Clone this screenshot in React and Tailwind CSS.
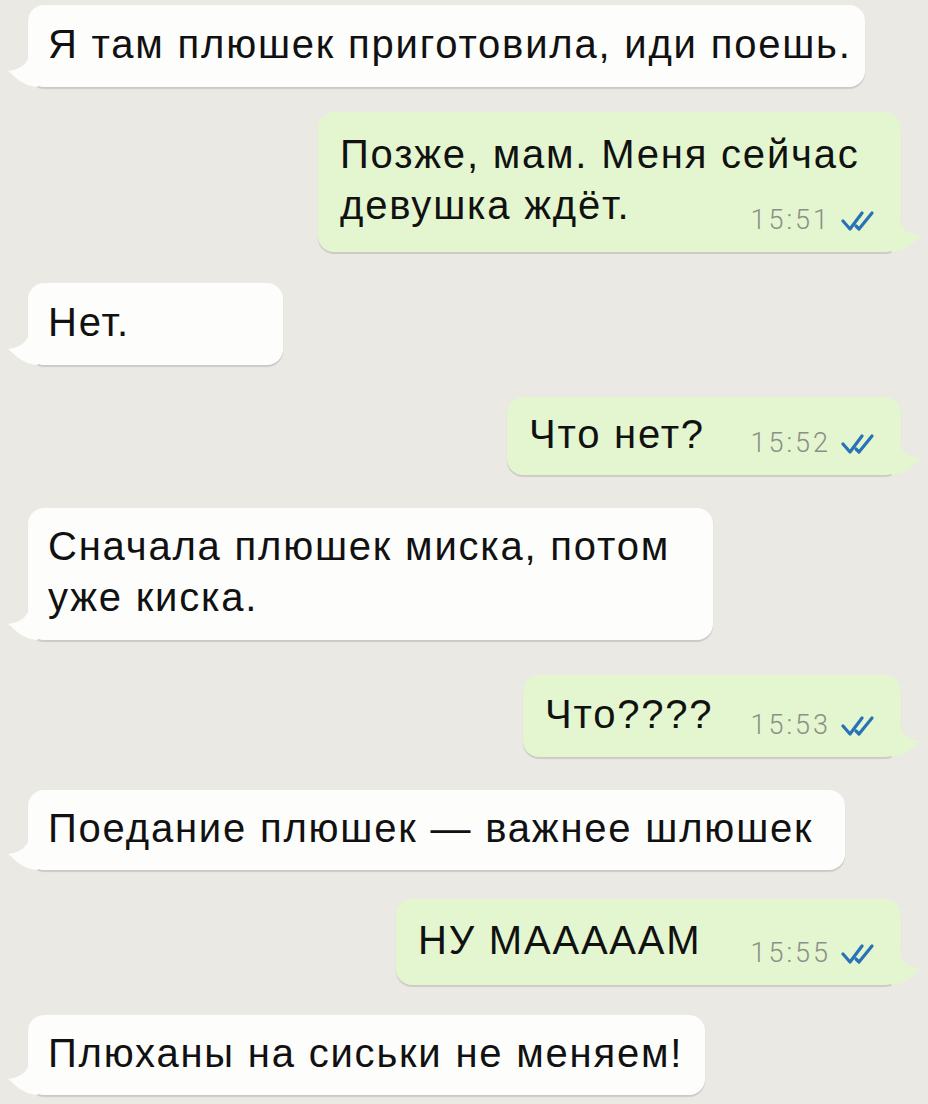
import React from "react";

const messages = [
  { id: 1, out: false, w: "w-[837px]", h: "h-[82px]", mt: "mt-[5px]", lines: ["Я там плюшек приготовила, иди поешь."] },
  { id: 2, out: true, w: "w-[583px]", h: "h-[140px]", mt: "mt-[25px]", lines: ["Позже, мам. Меня сейчас", "девушка ждёт."], time: "15:51" },
  { id: 3, out: false, w: "w-[255px]", h: "h-[82px]", mt: "mt-[31px]", lines: ["Нет."] },
  { id: 4, out: true, w: "w-[394px]", h: "h-[78px]", mt: "mt-[32px]", lines: ["Что нет?"], time: "15:52" },
  { id: 5, out: false, w: "w-[685px]", h: "h-[132px]", mt: "mt-[33px]", lines: ["Сначала плюшек миска, потом", "уже киска."] },
  { id: 6, out: true, w: "w-[378px]", h: "h-[82px]", mt: "mt-[35px]", lines: ["Что????"], time: "15:53" },
  { id: 7, out: false, w: "w-[817px]", h: "h-[80px]", mt: "mt-[33px]", lines: ["Поедание плюшек — важнее шлюшек"] },
  { id: 8, out: true, w: "w-[505px]", h: "h-[86px]", mt: "mt-[29px]", lines: ["НУ МААААAM"], time: "15:55" },
  { id: 9, out: false, w: "w-[677px]", h: "h-[80px]", mt: "mt-[30px]", lines: ["Плюханы на сиськи не меняем!"] },
];

const Tail = ({ out }) => (
  <svg
    width="30"
    height="40"
    viewBox="0 0 30 40"
    className={
      out
        ? "absolute -right-[20px] bottom-0 -scale-x-100"
        : "absolute -left-[20px] bottom-0"
    }
  >
    <path
      d="M22 0 C22 14 16 22 0 24 C8 30 14 39 30 40 L30 0 Z"
      fill={out ? "#e3f6cf" : "#fdfdfc"}
    />
  </svg>
);

const DoubleCheck = () => (
  <svg width="36" height="22" viewBox="0 0 36 22" className="ml-[10px] shrink-0">
    <path d="M2 11 L9 19 L21 3" fill="none" stroke="#2872b8" strokeWidth="3.2" strokeLinecap="round" strokeLinejoin="round" />
    <path d="M15 16 L18 19 L31 3" fill="none" stroke="#2872b8" strokeWidth="3.2" strokeLinecap="round" strokeLinejoin="round" />
  </svg>
);

const Bubble = ({ m }) => (
  <div className={`flex ${m.out ? "justify-end pr-[27px]" : "justify-start pl-[28px]"} ${m.mt}`}>
    <div
      className={`relative ${m.w} ${m.h} rounded-[16px] shadow-[0_2px_1px_rgba(0,0,0,0.13)] ${
        m.out ? "bg-[#e3f6cf] pl-[22px] pr-[24px]" : "bg-[#fdfdfc] pl-[20px]"
      } flex items-center`}
    >
      <Tail out={m.out} />
      <div className="relative flex-1 min-w-0 whitespace-nowrap text-[40px] leading-[51px] text-[#111] font-['Liberation_Sans',Arial,sans-serif] tracking-[1.8px] pb-[4px]">
        {m.lines.map((l, i) => (
          <div key={i}>{l}</div>
        ))}
      </div>
      {m.time && (
        <div className="relative shrink-0 self-end mb-[18px] flex items-center">
          <span className="text-[27px] leading-none font-['Roboto',sans-serif] font-light text-[#8c8f88] tracking-[3px]">
            {m.time}
          </span>
          <DoubleCheck />
        </div>
      )}
    </div>
  </div>
);

export default function App() {
  return (
    <div className="w-[928px] h-[1104px] overflow-hidden bg-[#ebe9e4] flex flex-col">
      {messages.map((m) => (
        <Bubble key={m.id} m={m} />
      ))}
    </div>
  );
}
